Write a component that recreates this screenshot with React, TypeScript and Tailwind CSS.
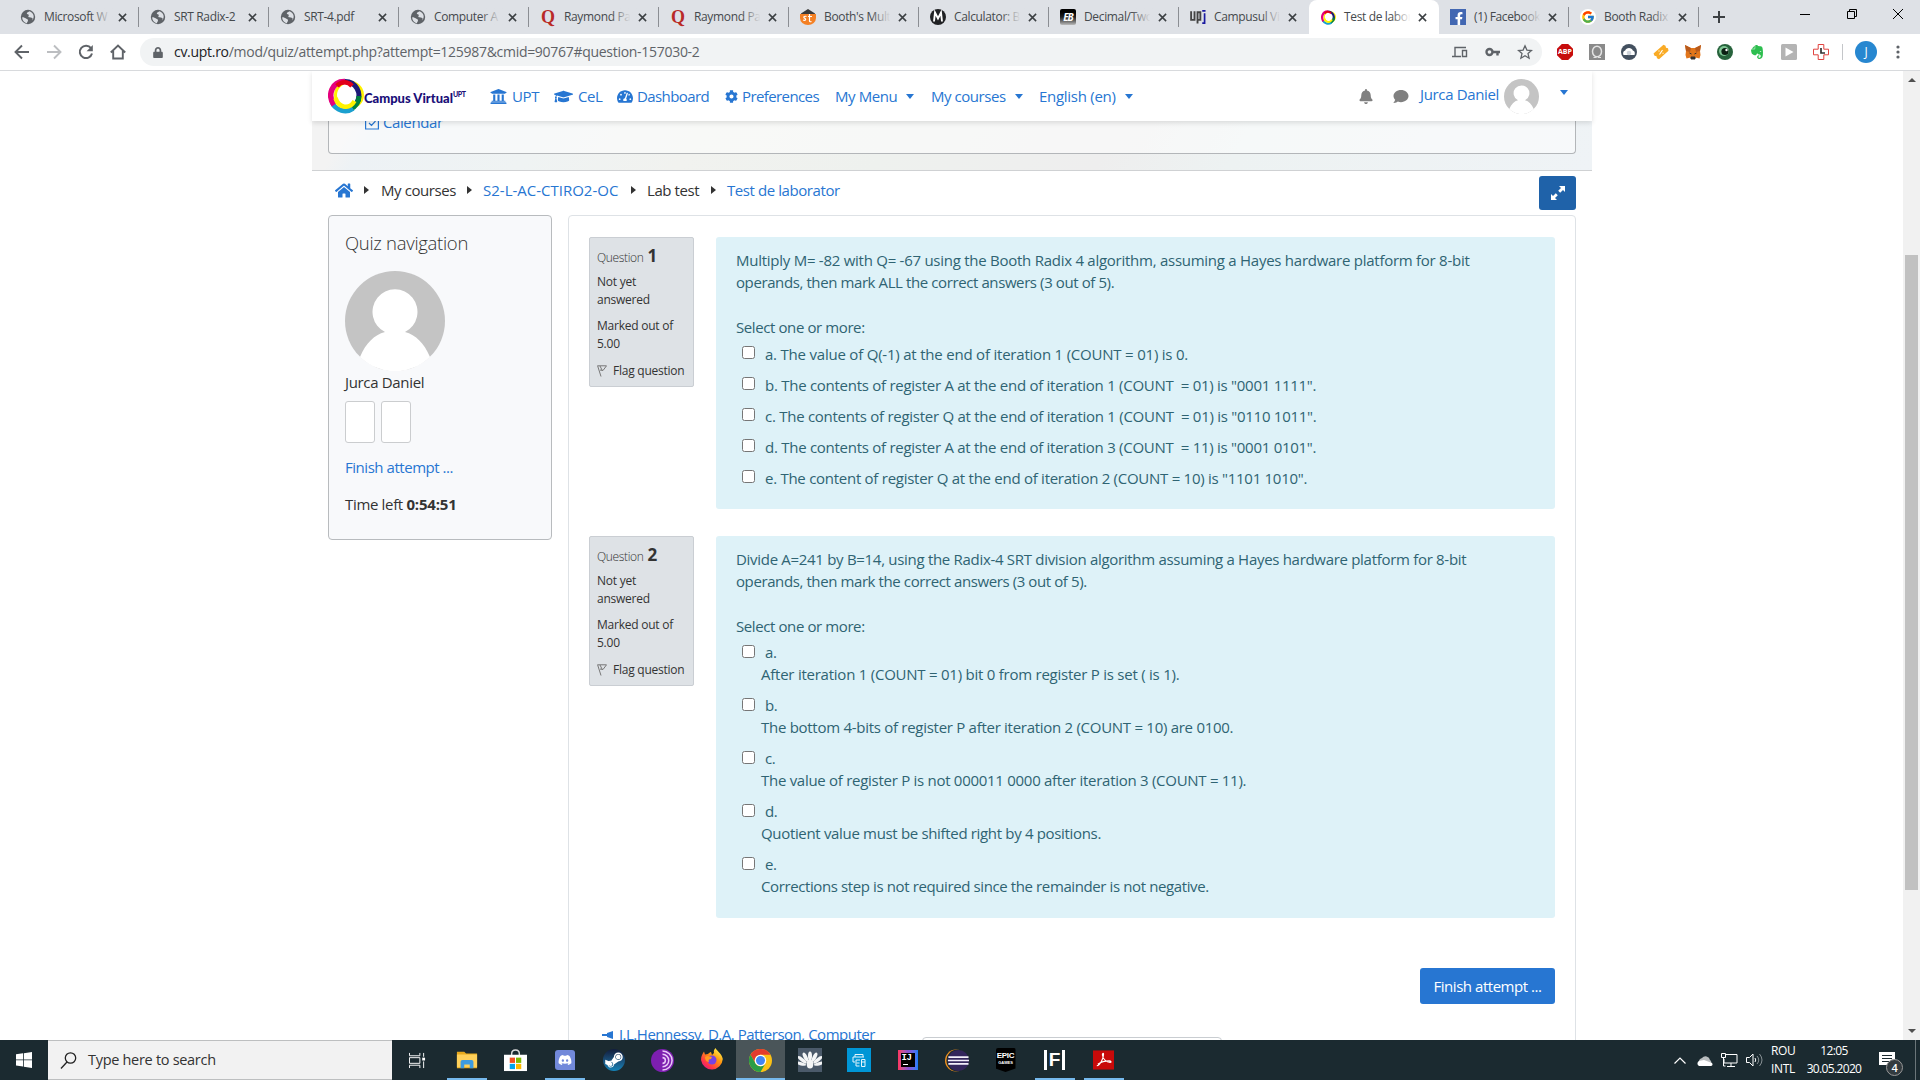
import { FaUniversity, FaGraduationCap, FaTachometerAlt, FaCog, FaBell, FaComment, FaHome, FaLock, FaDiscord, FaSteamSymbol, FaFacebookF, FaEvernote } from "react-icons/fa";
import { FcGoogle } from "react-icons/fc";

const ui = "font-['Open_Sans','Noto_Sans',sans-serif]";

function Globe() {
  return (
    <svg viewBox="0 0 16 16" className="h-4 w-4">
      <circle cx="8" cy="8" r="7.2" fill="#5f6368" />
      <path d="M2.2 8.2c2 0 2.6.6 3.800 1.300s2 .8 2 2-1 1.200-1 2.700c-2.600-.5-4.800-2.800-4.800-6zM9.500 2.200c-.8 1-2.800.9-2.700 2.200.1 1 1.800.5 2 1.600.2.900-.9 1.300-.3 2 .9 1 3.200.2 4 1.200.3.500 0 1.400-.6 2.200 1.400-1.200 2-2.800 1.700-4.600-.3-2.200-2-4-4.100-4.600z" fill="#dee1e6" />
    </svg>
  );
}

function Ring({ className }: { className: string }) {
  return (
    <svg viewBox="0 0 36 36" className={className}>
      <ellipse cx="21" cy="17" rx="13.500" ry="13" fill="none" stroke="#fff200" strokeWidth="3" />
      <path d="M17 3.500a14 14 0 0 1 12 21" fill="none" stroke="#1c1a78" strokeWidth="5" />
      <path d="M31 18c0 6-4 11-9 13.500" fill="none" stroke="#00813f" strokeWidth="5" />
      <path d="M25 30.500c-7 5-17 2-21-6" fill="none" stroke="#1ba0cf" strokeWidth="5" />
      <path d="M6 27C-1 17 4 3 17 3.500" fill="none" stroke="#e5007d" strokeWidth="5.500" />
      <path d="M9 8c4-5 11-5 15 0" fill="none" stroke="#e2001a" strokeWidth="4.500" />
      <path d="M7.500 20c3 10 14 12 19 3" fill="none" stroke="#fff200" strokeWidth="4.500" />
    </svg>
  );
}

function TabIcon({ kind }: { kind: string }) {
  switch (kind) {
    case "quora":
      return <span className="font-['Liberation_Serif',serif] text-[18px] leading-4 font-bold text-[#b92b27]">Q</span>;
    case "booth":
      return (
        <svg viewBox="0 0 16 16" className="h-4 w-4">
          <path d="M1 4.500 8 0l7 4.500V6H1z" fill="#3a3a3a" />
          <path d="M0 5h16v4a8 7 0 0 1-16 0z" fill="#f48024" />
          <path d="M6.500 7.500c-2.500-.8-3.500.8-1.800 1.800s1 2.600-1.700 1.700M9.500 5v7q.5 1.200 2 .5M8 7.500h4" stroke="#fff" strokeWidth="1.200" fill="none" />
        </svg>
      );
    case "calc":
      return (
        <svg viewBox="0 0 16 16" className="h-4 w-4">
          <circle cx="8" cy="8" r="8" fill="#202124" />
          <path d="M4 12.500 5 3.500l3 6 3-6 1 9" stroke="#fff" strokeWidth="1.900" fill="none" />
        </svg>
      );
    case "eb":
      return (
        <span className="flex h-4 w-4 items-center justify-center rounded-[2px] bg-gradient-to-b from-black via-[#222] to-[#bbb] text-[10px] font-bold tracking-[-1px] text-white italic">EB</span>
      );
    case "upj":
      return (
        <svg viewBox="0 0 17 16" className="h-4 w-[17px]">
          <path d="M1.200 2v9h3.600V2M8 15V3h3v8H8" stroke="#444" strokeWidth="2" fill="none" />
          <path d="M13 1.500h3.500M15.500 4v10.500H13" stroke="#1a1aa0" strokeWidth="1.800" fill="none" />
        </svg>
      );
    case "ring":
      return <Ring className="h-[15px] w-[15px]" />;
    case "fb":
      return (
        <span className="flex h-4 w-4 items-end justify-end bg-[#4267b2] pr-[2px]">
          <FaFacebookF className="h-[13px] w-[10px] text-white" />
        </span>
      );
    case "google":
      return (
        <span className="flex h-4 w-4 items-center justify-center rounded-full bg-white">
          <FcGoogle className="h-[14px] w-[14px]" />
        </span>
      );
    default:
      return <Globe />;
  }
}

const tabs: [string, string][] = [
  ["Microsoft W", "globe"],
  ["SRT Radix-2", "globe"],
  ["SRT-4.pdf", "globe"],
  ["Computer A", "globe"],
  ["Raymond Pa", "quora"],
  ["Raymond Pa", "quora"],
  ["Booth's Mult", "booth"],
  ["Calculator: B", "calc"],
  ["Decimal/Two", "eb"],
  ["Campusul Vi", "upj"],
  ["Test de labor", "ring"],
  ["(1) Facebook", "fb"],
  ["Booth Radix", "google"],
];

function TabStrip() {
  return (
    <div className="flex h-[34px] bg-[#dee1e6] pl-[9px]">
      {tabs.map(([title, kind], i) => {
        const active = i === 10;
        const separated = i !== 9 && i !== 10;
        const faded = i !== 1 && i !== 2;
        return (
          <div key={i} className={active ? "flex h-[34px] w-[130px] shrink-0 items-center rounded-t-lg bg-white" : "flex h-[34px] w-[130px] shrink-0 items-center"}>
            <span className="ml-[11px] flex w-4 shrink-0 justify-center"><TabIcon kind={kind} /></span>
            <span className="relative ml-2 w-[67px] shrink-0 text-[12px] leading-5 tracking-[-0.35px] whitespace-nowrap text-[#45494d]">
              {title}
              {faded && <span className={active ? "absolute inset-y-0 -right-[6px] w-[26px] bg-gradient-to-r from-transparent to-white to-75%" : "absolute inset-y-0 -right-[6px] w-[26px] bg-gradient-to-r from-transparent to-[#dee1e6] to-75%"} />}
            </span>
            <svg viewBox="0 0 10 10" className="relative ml-[7px] h-[9px] w-[9px] shrink-0"><path d="M1 1l8 8M9 1l-8 8" stroke="#3c4043" strokeWidth="1.700" /></svg>
            {separated && <span className="ml-auto h-5 w-px bg-[#8b8e93]" />}
          </div>
        );
      })}
      <svg viewBox="0 0 14 14" className="mt-[10px] ml-[13px] h-[14px] w-[14px]"><path d="M7 1v12M1 7h12" stroke="#3c4043" strokeWidth="2" /></svg>
      <svg viewBox="0 0 10 10" className="mt-[9px] ml-[74px] h-[10px] w-[10px]"><path d="M0 5.500h10" stroke="#000" /></svg>
      <svg viewBox="0 0 10 10" className="mt-[9px] ml-[37px] h-[10px] w-[10px]"><path d="M.5 2.500h7v7h-7zM2.500 2.500v-2h7v7h-2" stroke="#000" fill="none" /></svg>
      <svg viewBox="0 0 10 10" className="mt-[9px] ml-[36px] h-[10px] w-[10px]"><path d="M0 0l10 10M10 0L0 10" stroke="#000" /></svg>
    </div>
  );
}

function Toolbar() {
  return (
    <div className="flex h-[36px] items-center bg-white">
      <div className="flex w-[140px] shrink-0 items-center gap-4 pl-[14px]">
        <svg viewBox="0 0 16 16" className="h-4 w-4"><path d="M15 8H2M8 1.500 1.500 8 8 14.500" stroke="#5f6368" strokeWidth="1.900" fill="none" /></svg>
        <svg viewBox="0 0 16 16" className="h-4 w-4"><path d="M1 8h13M8 1.500 14.500 8 8 14.500" stroke="#bcbec1" strokeWidth="1.900" fill="none" /></svg>
        <svg viewBox="0 0 16 16" className="h-4 w-4"><path d="M13 4.200A6.200 6.200 0 1 0 14 9.500" stroke="#5f6368" strokeWidth="2" fill="none" /><path d="M14.800 1v6.200H8.600z" fill="#5f6368" /></svg>
        <svg viewBox="0 0 16 16" className="h-4 w-4"><path d="M0.800 8.500 8 1.500l7.200 7M3.200 7v7.500h9.600V7" stroke="#5f6368" strokeWidth="1.900" fill="none" /></svg>
      </div>
      <div className="flex h-[28px] w-[1402px] shrink-0 items-center rounded-full bg-[#f1f3f4] pr-[9px] pl-[13px]">
        <FaLock className="h-[11px] w-[10px] text-[#5f6368]" />
        <span className="-mt-px ml-[11px] text-[14px] tracking-[-0.29px] text-[#5f6368]"><span className="text-[#202124]">cv.upt.ro</span>/mod/quiz/attempt.php?attempt=125987&amp;cmid=90767#question-157030-2</span>
        <svg viewBox="0 0 16 12" className="ml-auto h-3 w-4"><path d="M3 10V1.500h11M0 10.500h9M10.500 4.500h4v6h-4z" stroke="#5f6368" strokeWidth="1.400" fill="none" /></svg>
        <svg viewBox="0 0 16 10" className="ml-[17px] h-[10px] w-4"><circle cx="4.500" cy="5" r="3" stroke="#5f6368" strokeWidth="2.400" fill="none" /><path d="M7.500 5H15M12.500 5v3.500" stroke="#5f6368" strokeWidth="2.400" /></svg>
        <svg viewBox="0 0 16 16" className="ml-4 h-4 w-4"><path d="M8 1.800l1.900 4.300 4.600.4-3.500 3.100 1.100 4.600L8 11.700l-4.100 2.500L5 9.600 1.500 6.500l4.600-.4z" stroke="#5f6368" strokeWidth="1.300" fill="none" /></svg>
      </div>
      <div className="ml-[15px] flex items-center gap-4">
        <span className="flex h-4 w-4 items-center justify-center bg-[#c70d0d] text-[7px] font-bold text-white [clip-path:polygon(30%_0,70%_0,100%_30%,100%_70%,70%_100%,30%_100%,0_70%,0_30%)]">ABP</span>
        <svg viewBox="0 0 16 16" className="h-4 w-4"><path d="M0 0h16v16H0z" fill="#8a8a8a" /><ellipse cx="8" cy="7.500" rx="4.500" ry="5.300" stroke="#e3e3e3" strokeWidth="1.500" fill="none" /><path d="M4.500 13.500h3M9 13.500h3" stroke="#e3e3e3" strokeWidth="1.200" /></svg>
        <svg viewBox="0 0 16 16" className="h-4 w-4"><circle cx="8" cy="8" r="8" fill="#43505f" /><path d="M2.500 11c-1-3 .5-4 1.700-4.500C5 3 11 3 11.800 6.500c1.200.5 2.700 1.500 1.700 4.500z" fill="#fff" /><circle cx="8" cy="9" r="2.300" fill="#cfd5dc" /></svg>
        <svg viewBox="0 0 16 16" className="h-4 w-4"><path d="M.5 9.500 10.500.8l2 1 .5 2 2 .5.500 2.500L6 15.200l-2-1-.5-2-2-.5z" fill="#f9ab26" /><path d="M6.500 10.500l3-4.500M6 6.500v1M10 8.800v1" stroke="#fff" strokeWidth="1.100" /></svg>
        <svg viewBox="0 0 16 16" className="h-4 w-4"><path d="M0 1l6 3h4l6-3-1 6 .5 4-1 3.500-4-1L9 15H7l-1.500-1.500-4 1L.5 11 1 7z" fill="#e2761b" /><path d="M0 1l6 3-1 4-4-1zM16 1l-6 3 1 4 4-1z" fill="#b85a1c" /><path d="M6 13h4v2H6zM4.500 9l2 1M11.500 9l-2 1" fill="#333" stroke="#333" /></svg>
        <svg viewBox="0 0 16 16" className="h-4 w-4"><circle cx="8" cy="8" r="8" fill="#27633c" /><circle cx="7" cy="7" r="5" fill="#7fc795" /><circle cx="8" cy="7.500" r="3.600" fill="#0c2013" /><circle cx="9.500" cy="6" r="1.200" fill="#fff" /></svg>
        <FaEvernote className="h-4 w-4 text-[#2dbe4f]" />
        <svg viewBox="0 0 16 16" className="h-4 w-4"><rect width="16" height="16" rx="1.500" fill="#b4b4b4" /><path d="M4.500 3.500 12.500 8l-8 4.500z" fill="#fff" /></svg>
        <svg viewBox="0 0 16 16" className="h-4 w-4"><path d="M5.200.5h5.600v4.700h4.700v5.600h-4.700v4.700H5.200v-4.700H.5V5.200h4.700z" stroke="#e0433f" fill="#fff" /><path d="M8 4v5h4" stroke="#333" strokeWidth="1.700" fill="none" /></svg>
      </div>
      <span className="ml-[13px] h-4 w-px bg-[#c4c6c9]" />
      <span className="ml-[12px] flex h-[22px] w-[22px] items-center justify-center rounded-full bg-[#2787d0] text-[12px] text-white">J</span>
      <svg viewBox="0 0 4 14" className="ml-[19px] h-[14px] w-1"><circle cx="2" cy="2" r="1.600" fill="#5f6368" /><circle cx="2" cy="7" r="1.600" fill="#5f6368" /><circle cx="2" cy="12" r="1.600" fill="#5f6368" /></svg>
    </div>
  );
}

function Avatar({ className }: { className: string }) {
  return (
    <svg viewBox="0 0 100 100" className={className}>
      <circle cx="50" cy="50" r="50" fill="#c4c4c4" />
      <path d="M15 86C21 72 29 64 40 61a22.500 22.500 0 1 1 20 0C71 64 79 72 85 86A50 50 0 0 1 15 86z" fill="#fff" />
    </svg>
  );
}

function Down() {
  return <span className="ml-[9px] h-0 w-0 border-x-[4.500px] border-t-[5px] border-x-transparent border-t-[#2776d2]" />;
}

function Header() {
  return (
    <div className="relative z-10 flex h-[50px] shrink-0 items-center bg-white text-[15px] tracking-[-0.4px] whitespace-nowrap text-[#2776d2] shadow-[0_2px_5px_rgba(0,0,0,0.12)]">
      <div className="ml-4 flex w-[162px] shrink-0 items-center">
        <Ring className="h-[36px] w-[36px]" />
        <span className="mt-[5px] font-[Lato,sans-serif] text-[13px] leading-none font-black tracking-[0px] text-[#1b0f78]">Campus Virtual</span>
        <span className="-mt-[3px] font-[Lato,sans-serif] text-[7px] font-black text-[#1b0f78]">UPT</span>
      </div>
      <div className="flex w-[64px] shrink-0 items-center"><FaUniversity className="mr-[5px] h-[17px] w-[17px]" />UPT</div>
      <div className="flex w-[63px] shrink-0 items-center"><FaGraduationCap className="mr-[5px] h-[19px] w-[19px]" />CeL</div>
      <div className="flex w-[108px] shrink-0 items-center tracking-[-0.6px]"><FaTachometerAlt className="mr-[4px] h-[15px] w-[16px]" />Dashboard</div>
      <div className="flex w-[110px] shrink-0 items-center tracking-[-0.6px]"><FaCog className="mr-1 h-[13px] w-[13px]" />Preferences</div>
      <div className="flex w-[96px] shrink-0 items-center">My Menu<Down /></div>
      <div className="flex w-[108px] shrink-0 items-center tracking-[-0.45px]">My courses<Down /></div>
      <div className="flex w-[320px] shrink-0 items-center tracking-[-0.28px]">English (en)<Down /></div>
      <FaBell className="h-[15px] w-[14px] shrink-0 text-[#808080]" />
      <FaComment className="mt-px ml-5 h-[15px] w-4 shrink-0 text-[#808080]" />
      <span className="-mt-1 ml-[11px] w-[84px] shrink-0 tracking-[-0.35px]">Jurca Daniel</span>
      <Avatar className="h-[35px] w-[35px] shrink-0" />
      <span className="-mt-[7px] ml-[21px] h-0 w-0 border-x-[4.500px] border-t-[5px] border-x-transparent border-t-[#2776d2]" />
    </div>
  );
}

function Banner() {
  return (
    <div className="flex h-[50px] shrink-0 flex-col border-b border-[#cfd1d3] bg-[linear-gradient(120deg,#f3f3f3_0%,#f3f3f3_3%,#edf2f5_5%,#eff3f3_18%,#f1f2ef_30%,#eef1ee_45%,#eeeeee_62%,#edf2f2_72%,#eff3f6_100%)] px-4">
      <div className="h-[33px] overflow-hidden rounded-b border border-t-0 border-[#b3b6b9] bg-white/50">
        <div className="-mt-[10px] ml-9 flex items-center text-[15px] tracking-[-0.4px] text-[#2776d2]">
          <svg viewBox="0 0 14 16" className="h-4 w-[14px]"><path d="M.6 3h12.800v12H.6zM4 9l2.500 2.500L10.500 7" stroke="#2776d2" strokeWidth="1.200" fill="none" /></svg>
          <span className="ml-[4px]">Calendar</span>
        </div>
      </div>
    </div>
  );
}

function Arrow() {
  return <span className="h-0 w-0 shrink-0 border-y-[4.500px] border-l-[5px] border-y-transparent border-l-[#333]" />;
}

function Breadcrumb() {
  return (
    <div className="flex h-[44px] shrink-0 items-start text-[15px] tracking-[-0.42px] whitespace-nowrap text-[#2776d2]">
      <div className="mt-[8px] ml-[23px] flex h-[22px] items-center">
        <div className="w-[29px]"><FaHome className="h-[17px] w-[18px]" /></div>
        <Arrow />
        <span className="ml-3 w-[86px] text-[#333]">My courses</span>
        <Arrow />
        <span className="ml-[11px] w-[148px] tracking-[0px]">S2-L-AC-CTIRO2-OC</span>
        <Arrow />
        <span className="ml-[11px] w-[64px] text-[#333]">Lab test</span>
        <Arrow />
        <span className="ml-[11px]">Test de laborator</span>
      </div>
      <div className="mt-[5px] mr-4 ml-auto flex h-[34px] w-[37px] items-center justify-center rounded-[3px] bg-[#1f62a9]">
        <svg viewBox="0 0 14 14" className="h-[14px] w-[14px]"><path d="M8 0h6v6l-2-2-2.800 2.800-2-2L10 2zM6 14H0V8l2 2 2.800-2.800 2 2L4 12z" fill="#fff" /></svg>
      </div>
    </div>
  );
}

function Sidebar() {
  return (
    <div className="flex h-[325px] w-[224px] shrink-0 flex-col items-start rounded border border-[#b8bbbe] bg-[#f8f9fb] pl-4 text-[15px] leading-[22px] tracking-[-0.33px] whitespace-nowrap text-[#333]">
      <div className="mt-4 text-[18.500px] font-light tracking-[-0.3px]">Quiz navigation</div>
      <Avatar className="mt-[17px] h-[100px] w-[100px]" />
      <div>Jurca Daniel</div>
      <div className="mt-2 flex gap-[6px]">
        <div className="h-[42px] w-[30px] rounded-[3px] border border-[#cbcdcf] bg-white" />
        <div className="h-[42px] w-[30px] rounded-[3px] border border-[#cbcdcf] bg-white" />
      </div>
      <div className="mt-[13px] tracking-[-0.46px] text-[#2776d2]">Finish attempt ...</div>
      <div className="mt-[15px]">Time left <b className="tracking-[-0.2px]">0:54:51</b></div>
    </div>
  );
}

function Info({ n }: { n: number }) {
  return (
    <div className="flex h-[150px] w-[105px] shrink-0 flex-col rounded-[2px] border border-[#caced3] bg-[#dee2e6] pl-[7px] text-[12px] leading-[18px] tracking-[-0.24px] whitespace-nowrap text-[#333]">
      <div className="mt-[6px] flex h-[24px] items-baseline"><span className="text-[12px] font-light tracking-[-0.35px]">Question</span><b className="ml-[4px] text-[17px] leading-6">{n}</b></div>
      <div className="mt-[5px]">Not yet<br />answered</div>
      <div className="mt-2">Marked out of<br />5.00</div>
      <div className="mt-[9px] flex items-center">
        <svg viewBox="0 0 10 12" className="mr-[6px] h-3 w-[10px]"><path d="M.5.5 4 11.500M1 .8h8.500L6 5.500 3 5M3 1l2 4" stroke="#777" fill="none" /></svg>
        Flag question
      </div>
    </div>
  );
}

function Check() {
  return <span className="h-[13px] w-[13px] shrink-0 rounded-[2.500px] border border-[#767676] bg-white" />;
}

const first: [string, string][] = [
  ["a. The value of Q(-1) at the end of iteration 1 (COUNT = 01) is 0.", "tracking-[-0.21px]"],
  ["b. The contents of register A at the end of iteration 1 (COUNT \u00a0= 01) is \"0001 1111\".", "tracking-[-0.27px]"],
  ["c. The contents of register Q at the end of iteration 1 (COUNT \u00a0= 01) is \"0110 1011\".", "tracking-[-0.27px]"],
  ["d. The contents of register A at the end of iteration 3 (COUNT \u00a0= 11) is \"0001 0101\".", "tracking-[-0.27px]"],
  ["e. The content of register Q at the end of iteration 2 (COUNT = 10) is \"1101 1010\".", "tracking-[-0.27px]"],
];
const second: [string, string, string][] = [
  ["a.", "After iteration 1 (COUNT = 01) bit 0 from register P is set ( is 1).", "tracking-[-0.24px]"],
  ["b.", "The bottom 4-bits of register P after iteration 2 (COUNT = 10) are 0100.", "tracking-[-0.28px]"],
  ["c.", "The value of register P is not 000011 0000 after iteration 3 (COUNT = 11).", "tracking-[-0.28px]"],
  ["d.", "Quotient value must be shifted right by 4 positions.", "tracking-[-0.33px]"],
  ["e.", "Corrections step is not required since the remainder is not negative.", "tracking-[-0.39px]"],
];

const panel = "w-[839px] shrink-0 rounded-[3px] bg-[#def2f8] pt-[12px] pl-5 text-[15px] leading-[22px] tracking-[-0.4px] whitespace-nowrap text-[#2f6473]";

function Quiz() {
  return (
    <div className="flex h-[900px] w-[1008px] shrink-0 flex-col rounded-t border border-[#dee2e6] bg-white pt-[21px] pl-5">
      <div className="flex h-[299px] shrink-0 items-start gap-[22px]">
        <Info n={1} />
        <div className={panel + " h-[272px]"}>
          <p><span className="tracking-[-0.26px]">Multiply M= -82 with Q= -67 using the Booth Radix 4 algorithm, assuming a Hayes hardware platform for 8-bit</span><br />operands, then mark ALL the correct answers (3 out of 5).</p>
          <p className="mt-[23px]">Select one or more:</p>
          {first.map(([t, track]) => (
            <div key={t} className="flex h-[31px] items-center pl-[6px]">
              <span className="-mt-[2px] mr-[10px] flex"><Check /></span><span className={track}>{t}</span>
            </div>
          ))}
        </div>
      </div>
      <div className="flex h-[382px] shrink-0 items-start gap-[22px]">
        <Info n={2} />
        <div className={panel + " h-[382px]"}>
          <p><span className="tracking-[-0.3px]">Divide A=241 by B=14, using the Radix-4 SRT division algorithm assuming a Hayes hardware platform for 8-bit</span><br />operands, then mark the correct answers (3 out of 5).</p>
          <p className="mt-[23px] mb-[4px]">Select one or more:</p>
          {second.map(([l, t, track]) => (
            <div key={l} className="h-[53px] pl-[6px]">
              <div className="flex h-[22px] items-center"><span className="-mt-[1px] mr-[10px] flex"><Check /></span>{l}</div>
              <div className="pl-[19px]"><span className={track}>{t}</span></div>
            </div>
          ))}
        </div>
      </div>
      <div className="mt-[50px] ml-[831px] flex h-[36px] w-[135px] shrink-0 items-center justify-center rounded-[3px] bg-[#2776d2] text-[15px] tracking-[-0.46px] text-white">Finish attempt ...</div>
      <div className="mt-[19px] flex shrink-0 items-start text-[15px] leading-[22px] tracking-[-0.48px] text-[#2776d2]">
        <svg viewBox="0 0 11 8" className="mt-[8px] ml-[13px] h-2 w-[11px]"><path d="M11 0v8L5 6V5H0V3h5V2z" fill="#2776d2" /></svg>
        <span className="ml-[6px] w-[303px]">J.L.Hennessy, D.A. Patterson, Computer</span>
        <span className="mt-[14px] h-9 w-[300px] rounded border border-[#c9cdd1]" />
      </div>
    </div>
  );
}

function AppIcon({ kind }: { kind: string }) {
  switch (kind) {
    case "task":
      return <svg viewBox="0 0 18 18" className="h-[17px] w-[17px]"><path d="M.5 1v3h11V1M.5 17v-3h11v3M.5 6h11v6H.5zM15.500 1v4M15.500 10v7" stroke="#fff" fill="none" /><path d="M14 6h3v3h-3z" fill="#fff" /></svg>;
    case "folder":
      return <svg viewBox="0 0 24 20" className="h-5 w-[22px]"><path d="M1 1h8l2 2h12v16H1z" fill="#e8a91c" /><path d="M1 4h22v14H1z" fill="#ffd05a" /><path d="M5 19v-7q0-2 2-2h10q2 0 2 2v7h-4v-4H9v4z" fill="#3d9be0" /></svg>;
    case "store":
      return <svg viewBox="0 0 24 24" className="h-[23px] w-[23px]"><path d="M8 7V5q0-4 4-4t4 4v2" stroke="#ddd" fill="none" strokeWidth="1.500" /><path d="M0 6h24v17H0z" fill="#fff" /><path d="M6 9h5.500v5.500H6z" fill="#f25022" /><path d="M12.500 9H18v5.500h-5.500z" fill="#7fba00" /><path d="M6 15.500h5.500V21H6z" fill="#00a4ef" /><path d="M12.500 15.500H18V21h-5.500z" fill="#ffb900" /></svg>;
    case "discord":
      return <span className="flex h-5 w-5 items-center justify-center rounded-t-[3px] rounded-bl-[3px] bg-[#7289da]"><FaDiscord className="h-[14px] w-[14px] text-white" /></span>;
    case "steam":
      return <span className="flex h-[22px] w-[22px] items-center justify-center overflow-hidden rounded-full bg-gradient-to-b from-[#111d3c] to-[#1383b8]"><FaSteamSymbol className="h-[20px] w-[20px] text-white" /></span>;
    case "tor":
      return <svg viewBox="0 0 24 24" className="h-[23px] w-[23px]"><circle cx="12" cy="12" r="12" fill="#7d1fb0" /><path d="M12 2a10 10 0 0 1 0 20M12 5.500a6.500 6.500 0 0 1 0 13M12 9a3 3 0 0 1 0 6" stroke="#e9c9f7" strokeWidth="1.600" fill="none" /></svg>;
    case "firefox":
      return (
        <svg viewBox="0 0 24 24" className="h-6 w-6">
          <defs><linearGradient id="ff" x1="1" y1="0" x2="0.200" y2="1"><stop offset="0.100" stopColor="#fff44f" /><stop offset="0.450" stopColor="#ff980e" /><stop offset="0.800" stopColor="#ff3647" /><stop offset="1" stopColor="#e31587" /></linearGradient></defs>
          <path d="M1 12C1 8 2.500 6 4 3.500l1 3L8 6c1-1 2-2 3-2l1 3 2-2c-.5-2 0-3.500 1.500-5C17 3 22 6 22.800 11A11 11.500 0 0 1 1 12z" fill="url(#ff)" />
          <circle cx="12" cy="12" r="4.500" fill="#7542e5" /><path d="M5 9c3-2 5 0 7 0l-1 2c-2 0-3 1-2 3-3 0-4-3-4-5z" fill="#ff9a1f" />
        </svg>
      );
    case "chrome":
      return (
        <svg viewBox="0 0 24 24" className="h-[23px] w-[23px]">
          <circle cx="12" cy="12" r="12" fill="#fbc116" />
          <path d="M1.600 6A12 12 0 0 1 22.400 6H12a6 6 0 0 0-5.500 8.500z" fill="#e33b2e" />
          <path d="M1.600 6A12 12 0 0 0 12 24l5.200-9a6 6 0 0 1-10.400 0z" fill="#2a9d48" />
          <circle cx="12" cy="12" r="6" fill="#fff" /><circle cx="12" cy="12" r="4.700" fill="#4285f4" />
        </svg>
      );
    case "peacock":
      return (
        <svg viewBox="0 0 24 24" className="h-6 w-6">
          <path d="M0 0h24v24H0z" fill="#4b5a6a" />
          <g fill="#f4f6f7">
            <ellipse cx="12" cy="8" rx="2" ry="4.500" />
            <ellipse cx="12" cy="8" rx="1.900" ry="5" transform="rotate(-27 12 18)" />
            <ellipse cx="12" cy="8" rx="1.900" ry="5" transform="rotate(27 12 18)" />
            <ellipse cx="12" cy="8" rx="1.800" ry="5.500" transform="rotate(-52 12 18)" />
            <ellipse cx="12" cy="8" rx="1.800" ry="5.500" transform="rotate(52 12 18)" />
            <ellipse cx="12" cy="8" rx="1.600" ry="6" transform="rotate(-76 12 18)" />
            <ellipse cx="12" cy="8" rx="1.600" ry="6" transform="rotate(76 12 18)" />
            <ellipse cx="12" cy="16" rx="3.300" ry="4.500" />
          </g>
        </svg>
      );
    case "blue":
      return <svg viewBox="0 0 24 24" className="h-6 w-6"><path d="M0 0h24v24H0z" fill="#0096d6" /><path d="M8 9V6.500h8V9M8 14H6V9h11M9 12h4M9 12v6h3.500M9.500 15h3M14.500 11.500h3.500v7h-3.500zM14.500 14H18" stroke="#e6f5fb" fill="none" /></svg>;
    case "ij":
      return <span className="flex h-5 w-5 items-center justify-center bg-gradient-to-r from-[#fe315d] via-[#8a4fd0] to-[#087cfa]"><span className="flex h-[14px] w-[14px] flex-col justify-between bg-black p-[1px]"><span className="font-['Liberation_Mono',monospace] text-[9px] leading-[9px] font-bold tracking-[-0.500px] text-white">IJ</span><span className="mb-px ml-px h-px w-[5px] bg-white" /></span></span>;
    case "eclipse":
      return <svg viewBox="0 0 25 24" className="h-[23px] w-6"><circle cx="11.500" cy="12" r="11.500" fill="#f7941e" /><circle cx="13" cy="12" r="11.500" fill="#1c2a30" /><circle cx="14" cy="12" r="11" fill="#33265c" /><path d="M3.500 8.500h21M3 12h22M3.500 15.500h21" stroke="#f3f0fa" strokeWidth="1.800" /></svg>;
    case "epic":
      return <span className="flex h-6 w-5 flex-col items-center rounded-t-[2px] bg-black pt-[3px] text-white [clip-path:polygon(0_0,100%_0,100%_85%,50%_100%,0_85%)]"><span className="font-['Liberation_Sans_Narrow','Liberation_Sans',sans-serif] text-[8px] leading-[9px] font-bold tracking-[-0.300px]">EPIC</span><span className="font-['Liberation_Sans',sans-serif] text-[4px] leading-[5px] font-bold">GAMES</span></span>;
    case "f":
      return <span className="flex h-5 items-center gap-[2px]"><span className="h-5 w-[3px] bg-white" /><span className="font-['Liberation_Sans',sans-serif] text-[19px] leading-5 font-bold text-white">F</span><span className="h-5 w-[3px] bg-white" /></span>;
    default:
      return <svg viewBox="0 0 22 20" className="h-5 w-[21px]"><path d="M0 0h22v20H0z" fill="#c80a0a" /><path d="M4 16c3 0 7-7 7-12 0-1.500-1.500-1-1 1 .5 4 4 7 8 7.500 1.500 0 1-1.500-1-1.500-4 0-9 1.500-12 3.500" stroke="#fff" strokeWidth="1.300" fill="none" /></svg>;
  }
}

const apps: [string, string][] = [
  ["task", ""], ["folder", "on"], ["store", ""], ["discord", "on"], ["steam", ""], ["tor", ""], ["firefox", ""], ["chrome", "active"],
  ["peacock", ""], ["blue", ""], ["ij", ""], ["eclipse", ""], ["epic", ""], ["f", "on"], ["pdf", "on"],
];

function Taskbar() {
  return (
    <div className="flex h-10 shrink-0 items-center bg-[#1b2a30] whitespace-nowrap">
      <div className="flex w-[48px] shrink-0 justify-center"><svg viewBox="0 0 16 16" className="h-4 w-4"><path d="M0 2.300 7 1.300v6.200H0zM7.800 1.200 16 0v7.500H7.800zM0 8.300h7v6.200l-7-1zM7.800 8.300H16V16l-8.200-1.200z" fill="#fff" /></svg></div>
      <div className="flex h-10 w-[344px] shrink-0 items-center border-y border-[#bdbfc0] bg-[#f2f2f2] pl-3">
        <svg viewBox="0 0 17 17" className="h-[17px] w-[17px]"><circle cx="10.500" cy="6" r="5.200" stroke="#222" strokeWidth="1.300" fill="none" /><path d="M7 10 1 16.500" stroke="#222" strokeWidth="1.300" /></svg>
        <span className="ml-[11px] text-[14.500px] tracking-[-0.3px] text-[#333]">Type here to search</span>
      </div>
      <div className="ml-px flex w-[736px] shrink-0">
        {apps.map(([kind, state]) => (
          <div key={kind} className={state === "active" ? "relative flex h-10 w-[49px] shrink-0 items-center justify-center bg-[#4a5559]" : "relative flex h-10 w-[49px] shrink-0 items-center justify-center"}>
            <AppIcon kind={kind} />
            {state !== "" && <span className={state === "active" ? "absolute bottom-0 h-[2px] w-[49px] bg-[#76b9ed]" : "absolute bottom-0 h-[2px] w-[40px] bg-[#76b9ed]"} />}
          </div>
        ))}
      </div>
      <div className="ml-auto flex h-10 items-center text-[12px] leading-[18px] tracking-[-0.35px] text-white">
        <svg viewBox="0 0 12 7" className="h-[7px] w-3"><path d="M.5 6.500 6 1l5.500 5.500" stroke="#fff" strokeWidth="1.200" fill="none" /></svg>
        <svg viewBox="0 0 17 11" className="ml-[10px] h-[11px] w-[17px]"><path d="M3 8a4 4 0 0 1 3-5 4.500 4.500 0 0 1 8 2 3 3 0 0 1 0 5z" fill="#b9bdbf" /><path d="M3 11a2.800 2.800 0 0 1 0-5l5-1 8 3a2 2 0 0 1-1 3z" fill="#fff" /></svg>
        <svg viewBox="0 0 17 14" className="ml-[8px] h-[14px] w-[17px]"><path d="M5 1.500h11v8.500H3V6M10 10v3M6 13.500h8M.5.500h4v4h-4zM2.500 4.500V13h2" stroke="#fff" fill="none" /></svg>
        <svg viewBox="0 0 17 14" className="ml-[8px] h-[14px] w-[17px]"><path d="M.5 4.500h3L7 1v12L3.500 9.500h-3z" stroke="#fff" fill="none" /><path d="M9 5q1.500 2 0 4" stroke="#fff" fill="none" /><path d="M11 3q3.500 4 0 8M13.500 1q5 6 0 12" stroke="#889194" fill="none" /></svg>
        <span className="ml-[8px] w-[25px]">ROU<br />INTL</span>
        <span className="ml-[9px] w-[58px] text-center tracking-[-0.65px]">12:05<br />30.05.2020</span>
        <span className="relative ml-[16px] flex h-10 w-[24px] items-center">
          <svg viewBox="0 0 16 16" className="h-4 w-4"><path d="M0 0h16v13h-3v3l-4-3H0z" fill="#fff" /><path d="M3 3.500h10M3 6.500h10M3 9.500h7" stroke="#1b2a30" strokeWidth="1.200" /></svg>
          <span className="absolute top-[19px] left-[7px] flex h-[17px] w-[17px] items-center justify-center rounded-full border border-[#999] bg-[#333b3f] text-[11px] font-semibold">4</span>
        </span>
        <span className="mr-1 ml-[12px] h-10 w-px bg-[#6b7579]" />
      </div>
    </div>
  );
}

export default function App() {
  return (
    <div className={ui + " flex h-[1080px] w-[1920px] flex-col overflow-hidden bg-white"}>
      <TabStrip />
      <Toolbar />
      <div className="h-px shrink-0 bg-[#d8dadd]" />
      <div className="flex h-[969px] shrink-0 overflow-hidden">
        <div className="ml-[312px] flex w-[1280px] shrink-0 flex-col">
          <Header />
          <Banner />
          <Breadcrumb />
          <div className="flex items-start gap-4 pl-4">
            <Sidebar />
            <Quiz />
          </div>
        </div>
        <div className="ml-auto flex w-[17px] shrink-0 flex-col items-center bg-[#f1f1f1]">
          <span className="mt-[7px] h-0 w-0 border-x-[4px] border-b-[4px] border-x-transparent border-b-[#505050]" />
          <span className="mt-[173px] h-[635px] w-[13px] bg-[#c1c1c1]" />
          <span className="mt-auto mb-[7px] h-0 w-0 border-x-[4px] border-t-[4px] border-x-transparent border-t-[#505050]" />
        </div>
      </div>
      <Taskbar />
    </div>
  );
}
